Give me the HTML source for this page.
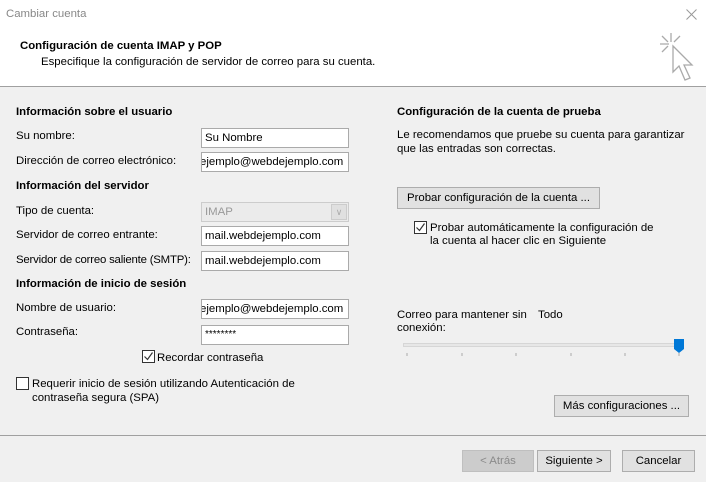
<!DOCTYPE html>
<html><head><meta charset="utf-8"><style>
*{margin:0;padding:0;box-sizing:border-box}
body{width:706px;height:482px;background:#f0f0f0;font-family:"Liberation Sans",sans-serif;font-size:11.4px;color:#000;position:relative;overflow:hidden}
.a{position:absolute;white-space:nowrap;line-height:14px}
.b{font-weight:bold}
.in{position:absolute;left:201px;width:148px;height:20px;background:#fff;border:1px solid #aaa;line-height:18px;padding-left:3px;overflow:hidden;white-space:nowrap}
.btn{position:absolute;height:22px;background:#e1e1e1;border:1px solid #adadad;text-align:center;line-height:20px}
.cb{position:absolute;width:13px;height:13px;border:1px solid #333;background:#fff}
.ck{position:absolute}
</style></head><body>
<div style="position:absolute;left:0;top:0;width:706px;height:87px;background:#fff;border-bottom:1px solid #a0a0a0"></div>
<div class="a" style="left:6px;top:7px;color:#888">Cambiar cuenta</div>
<svg style="position:absolute;left:686px;top:9px" width="11" height="11" stroke="#999" stroke-width="1"><path d="M0.5 0.5L10.5 10.5M10.5 0.5L0.5 10.5"/></svg>
<div class="a b" style="left:20px;top:39px">Configuración de cuenta IMAP y POP</div>
<div class="a" style="left:41px;top:55px">Especifique la configuración de servidor de correo para su cuenta.</div>
<svg style="position:absolute;left:655px;top:33px" width="42" height="52" viewBox="0 0 42 52" fill="none" stroke="#aaa" stroke-width="1.3">
<path d="M16 0v9M5 11h9M7 3l6 6M25 3l-6 6M7 19l6-6"/>
<path d="M18 13 L18 39 L24 33 L30 47 L35 45 L29 32 L37 32 Z" fill="#fff"/>
</svg>

<div class="a b" style="left:16px;top:105px">Información sobre el usuario</div>
<div class="a" style="left:16px;top:129px">Su nombre:</div>
<div class="in" style="top:128px">Su Nombre</div>
<div class="a" style="left:16px;top:154px">Dirección de correo electrónico:</div>
<div class="in" style="top:152px;padding-left:0"><span style="margin-left:-2px">ejemplo@webdejemplo.com</span></div>
<div class="a b" style="left:16px;top:179px">Información del servidor</div>
<div class="a" style="left:16px;top:204px">Tipo de cuenta:</div>
<div class="in" style="top:202px;background:#ebebeb;border-color:#ccc;color:#999">IMAP<div style="position:absolute;right:1px;top:1px;width:16px;height:16px;background:#e0e0e0;border:1px solid #ccc;text-align:center;line-height:14px;font-size:9px;color:#aaa">∨</div></div>
<div class="a" style="left:16px;top:228px">Servidor de correo entrante:</div>
<div class="in" style="top:226px">mail.webdejemplo.com</div>
<div class="a" style="left:16px;top:253px;letter-spacing:-0.2px">Servidor de correo saliente (SMTP):</div>
<div class="in" style="top:251px">mail.webdejemplo.com</div>
<div class="a b" style="left:16px;top:277px">Información de inicio de sesión</div>
<div class="a" style="left:16px;top:301px">Nombre de usuario:</div>
<div class="in" style="top:299px;padding-left:0"><span style="margin-left:-2px">ejemplo@webdejemplo.com</span></div>
<div class="a" style="left:16px;top:325px">Contraseña:</div>
<div class="in" style="top:325px;font-size:10px">********</div>
<div class="cb" style="left:142px;top:350px"></div>
<svg class="ck" style="left:142px;top:350px" width="13" height="13" stroke="#333" fill="none" stroke-width="1.2"><path d="M2.5 6.5l3 3 5-7"/></svg>
<div class="a" style="left:157px;top:351px">Recordar contraseña</div>
<div class="cb" style="left:16px;top:377px"></div>
<div class="a" style="left:32px;top:377px">Requerir inicio de sesión utilizando Autenticación de</div>
<div class="a" style="left:32px;top:391px">contraseña segura (SPA)</div>

<div class="a b" style="left:397px;top:105px">Configuración de la cuenta de prueba</div>
<div class="a" style="left:397px;top:128px">Le recomendamos que pruebe su cuenta para garantizar</div>
<div class="a" style="left:397px;top:142px">que las entradas son correctas.</div>
<div class="btn" style="left:397px;top:187px;width:203px">Probar configuración de la cuenta ...</div>
<div class="cb" style="left:414px;top:221px"></div>
<svg class="ck" style="left:414px;top:221px" width="13" height="13" stroke="#333" fill="none" stroke-width="1.2"><path d="M2.5 6.5l3 3 5-7"/></svg>
<div class="a" style="left:430px;top:221px">Probar automáticamente la configuración de</div>
<div class="a" style="left:430px;top:234px">la cuenta al hacer clic en Siguiente</div>
<div class="a" style="left:397px;top:308px">Correo para mantener sin</div>
<div class="a" style="left:538px;top:308px">Todo</div>
<div class="a" style="left:397px;top:321px">conexión:</div>
<div style="position:absolute;left:403px;top:343px;width:277px;height:4px;background:#e7e7e7;border:1px solid #d6d6d6"></div>
<svg style="position:absolute;left:673px;top:338px" width="12" height="16"><path d="M1 1h10v10l-5 4-5-4z" fill="#0078d7"/></svg>
<svg style="position:absolute;left:400px;top:352px" width="290" height="6" stroke="#aaa"><path d="M7 1v3M62 1v3M116 1v3M171 1v3M225 1v3M279 1v3"/></svg>
<div class="btn" style="left:554px;top:395px;width:135px">Más configuraciones ...</div>
<div style="position:absolute;left:0;top:435px;width:706px;height:1px;background:#a0a0a0"></div>
<div class="btn" style="left:462px;top:450px;width:72px;background:#ccc;border-color:#bfbfbf;color:#8a8a8a">&lt; Atrás</div>
<div class="btn" style="left:537px;top:450px;width:74px">Siguiente &gt;</div>
<div class="btn" style="left:622px;top:450px;width:73px">Cancelar</div>
</body></html>
